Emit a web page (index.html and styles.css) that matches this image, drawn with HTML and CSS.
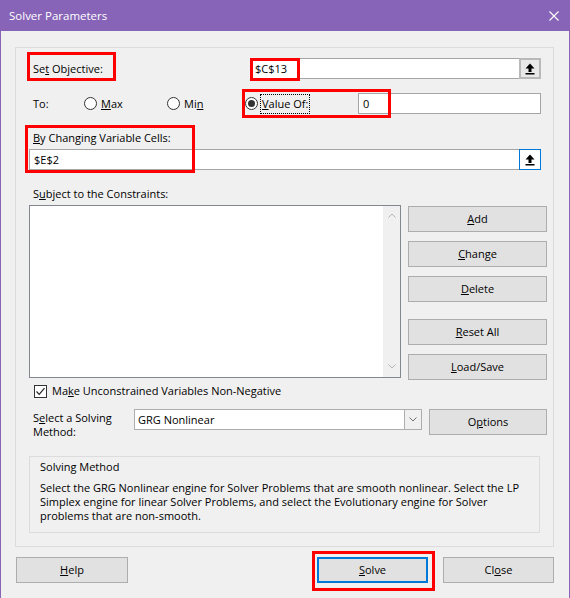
FILE: index.html
```html
<!DOCTYPE html>
<html lang="en">
<head>
    <meta charset="utf-8">
    <title>Solver Parameters</title>
    <link rel="stylesheet" href="styles.css">
</head>
<body>
<div class="window">
    <div class="titlebar">
        <span class="title">Solver Parameters</span>
        <svg class="close" width="10" height="10" viewBox="0 0 10 10"><path d="M0.5 0.5L9.5 9.5M9.5 0.5L0.5 9.5" stroke="#fff" stroke-width="1.1"/></svg>
    </div>

    <div class="group">
        <div class="row row-objective">
            <span class="lbl">Se<u>t</u> Objective:</span>
            <div class="field field-objective">
                <span class="val">$C$13</span>
                <span class="refbtn">
                    <svg width="10" height="12" viewBox="0 0 10 12"><path d="M5 0.5L9.5 5.5H6.5V9H3.5V5.5H0.5Z" fill="#000"/><rect x="0.5" y="10" width="9" height="1.5" fill="#000"/></svg>
                </span>
            </div>
        </div>

        <div class="row row-to">
            <span class="lbl to">To:</span>
            <span class="opt opt-max"><span class="radio"></span><span><u>M</u>ax</span></span>
            <span class="opt opt-min"><span class="radio"></span><span>Mi<u>n</u></span></span>
            <span class="opt opt-value"><span class="radio on"></span><span class="focus"><u>V</u>alue Of:</span></span>
            <div class="field field-value"><span class="val">0</span></div>
        </div>

        <div class="lbl cap cap-changing"><u>B</u>y Changing Variable Cells:</div>
        <div class="field field-changing">
            <span class="val">$E$2</span>
            <span class="refbtn ref-active">
                <svg width="10" height="12" viewBox="0 0 10 12"><path d="M5 0.5L9.5 5.5H6.5V9H3.5V5.5H0.5Z" fill="#000"/><rect x="0.5" y="10" width="9" height="1.5" fill="#000"/></svg>
            </span>
        </div>

        <div class="lbl cap cap-subject">S<u>u</u>bject to the Constraints:</div>
        <div class="constraints">
            <div class="listbox">
                <div class="scroll">
                    <svg width="8" height="5" viewBox="0 0 8 5"><path d="M0.5 4.5L4 1L7.5 4.5" fill="none" stroke="#b4b4b4"/></svg>
                    <svg width="8" height="5" viewBox="0 0 8 5"><path d="M0.5 0.5L4 4L7.5 0.5" fill="none" stroke="#b4b4b4"/></svg>
                </div>
            </div>
            <div class="side">
                <button class="btn"><u>A</u>dd</button>
                <button class="btn"><u>C</u>hange</button>
                <button class="btn"><u>D</u>elete</button>
                <button class="btn btn-reset"><u>R</u>eset All</button>
                <button class="btn"><u>L</u>oad/Save</button>
            </div>
        </div>

        <div class="check-row">
            <span class="check">
                <svg width="11" height="11" viewBox="0 0 11 11"><path d="M1.5 5.5L4.2 8.3L9.5 2.2" fill="none" stroke="#222" stroke-width="1.2"/></svg>
            </span>
            <span>Ma<u>k</u>e Unconstrained Variables Non-Negative</span>
        </div>

        <div class="method-row">
            <span class="lbl method-lbl">S<u>e</u>lect a Solving<br>Method:</span>
            <div class="combo">
                <span class="combo-val">GRG Nonlinear</span>
                <span class="drop">
                    <svg width="8" height="5" viewBox="0 0 8 5"><path d="M0.5 0.5L4 4L7.5 0.5" fill="none" stroke="#707070"/></svg>
                </span>
            </div>
            <button class="btn btn-options">O<u>p</u>tions</button>
        </div>

        <div class="info">
            <div class="info-title">Solving Method</div>
            <p class="info-text">Select the GRG Nonlinear engine for Solver Problems that are smooth nonlinear. Select the LP<br>Simplex engine for linear Solver Problems, and select the Evolutionary engine for Solver<br>problems that are non-smooth.</p>
        </div>
    </div>

    <div class="footer">
        <button class="btn btn-foot"><u>H</u>elp</button>
        <button class="btn btn-foot btn-default"><u>S</u>olve</button>
        <button class="btn btn-foot">Cl<u>o</u>se</button>
    </div>

    <div class="mark mark-objective"></div>
    <div class="mark mark-cell"></div>
    <div class="mark mark-value"></div>
    <div class="mark mark-changing"></div>
    <div class="mark mark-solve"></div>
</div>
</body>
</html>
```

FILE: styles.css
```css
* {
    box-sizing: border-box;
}
body {
    margin: 0;
    background: #f0f0f0;
    font: 11px/16px "Open Sans", "Noto Sans", sans-serif;
    color: #000;
}
u {
    text-underline-offset: 1px;
}

.window {
    position: relative;
    width: 570px;
    height: 598px;
    border-left: 1px solid #8764b8;
    border-right: 1px solid #8764b8;
    background: #f0f0f0;
    overflow: hidden;
}
.titlebar {
    height: 31px;
    background: #8764b8;
    color: #fff;
    display: flex;
    align-items: center;
    justify-content: space-between;
    padding: 0 10px 0 8px;
    font-size: 11.5px;
}

.group {
    margin: 16px 0 0 14px;
    width: 539px;
    height: 500px;
    border: 1px solid #dcdcdc;
    padding: 0 12px 0 13px;
}
.lbl {
    padding-left: 4px;
    white-space: nowrap;
}
.row {
    display: flex;
    align-items: center;
    height: 21px;
}
.row-objective {
    margin-top: 10px;
}
.row-objective .lbl {
    flex: 1;
}
.field {
    display: flex;
    align-items: center;
    height: 21px;
    background: #fff;
    border: 1px solid #a5a5a5;
    padding-left: 4px;
}
.field-objective {
    width: 291px;
}
.refbtn {
    margin: -1px -1px -1px auto;
    width: 22px;
    height: 21px;
    display: flex;
    align-items: center;
    justify-content: center;
    border: 2px solid #b9b9b9;
    background: #e9e9e9;
}
.refbtn.ref-active {
    border: 1px solid #0078d7;
    background: #fff;
}

.row-to {
    margin-top: 14px;
}
.to {
    width: 55px;
}
.opt {
    display: flex;
    align-items: center;
    gap: 4px;
}
.opt-max {
    width: 83px;
}
.opt-min {
    width: 78px;
}
.opt-value {
    width: 113px;
    gap: 2px;
}
.radio {
    position: relative;
    flex: none;
    width: 13px;
    height: 13px;
    border: 1px solid #333;
    border-radius: 50%;
    background: #fff;
}
.radio.on::after {
    content: "";
    position: absolute;
    left: 2px;
    top: 2px;
    width: 7px;
    height: 7px;
    border-radius: 50%;
    background: #333;
}
.focus {
    border: 1px dotted #000;
    padding: 1px 1px;
}
.field-value {
    width: 183px;
}

.cap {
    height: 16px;
    margin-top: 16px;
}
.field-changing {
    margin-top: 3px;
    width: 512px;
}

.constraints {
    display: flex;
    gap: 7px;
    margin: 3px -6px 0 0;
    height: 173px;
}
.listbox {
    width: 372px;
    height: 173px;
    border: 1px solid #828790;
    background: #fff;
    display: flex;
    justify-content: flex-end;
}
.scroll {
    width: 17px;
    background: #f0f0f0;
    display: flex;
    flex-direction: column;
    justify-content: space-between;
    align-items: center;
    padding: 7px 0 8px;
}
.side {
    width: 139px;
    display: flex;
    flex-direction: column;
    gap: 9px;
    padding-top: 1px;
}
.btn {
    flex: none;
    height: 26px;
    background: #e1e1e1;
    border: 1px solid #adadad;
    font: inherit;
    color: #000;
    padding: 0;
}
.btn-reset {
    margin-top: 8px;
}

.check-row {
    display: flex;
    align-items: center;
    gap: 5px;
    height: 16px;
    margin-top: 5px;
    padding-left: 5px;
}
.check {
    width: 13px;
    height: 13px;
    border: 1px solid #333;
    background: #fff;
    display: flex;
}

.method-row {
    display: flex;
    align-items: flex-start;
    height: 26px;
    margin: 10px -6px 0 0;
}
.method-lbl {
    width: 105px;
    line-height: 14px;
    margin-top: 2px;
}
.combo {
    width: 288px;
    height: 21px;
    background: #fff;
    border: 1px solid #adadad;
    display: flex;
    align-items: center;
    padding-left: 3px;
}
.combo-val {
    flex: 1;
}
.drop {
    width: 17px;
    height: 19px;
    border-left: 1px solid #adadad;
    background: #f0f0f0;
    display: flex;
    align-items: center;
    justify-content: center;
}
.btn-options {
    width: 118px;
    margin-left: 7px;
}

.info {
    margin-top: 21px;
    width: 511px;
    height: 77px;
    border: 1px solid #dcdcdc;
    padding: 3px 0 0 10px;
}
.info-title {
    line-height: 14px;
}
.info-text {
    margin: 7px 0 0;
    line-height: 14px;
    white-space: nowrap;
}

.footer {
    display: flex;
    margin-top: 10px;
    padding: 0 15px;
}
.btn-foot {
    width: 111px;
}
.btn-foot:first-child {
    width: 112px;
}
.btn-default {
    margin: 0 15px 0 auto;
    border: 2px solid #0078d7;
}

.mark {
    position: absolute;
    border: 3px solid #ff0000;
    pointer-events: none;
}
.mark-objective {
    left: 26px;
    top: 52px;
    width: 89px;
    height: 29px;
}
.mark-cell {
    left: 249px;
    top: 58px;
    width: 50px;
    height: 23px;
}
.mark-value {
    left: 241px;
    top: 89px;
    width: 149px;
    height: 29px;
}
.mark-changing {
    left: 24px;
    top: 125px;
    width: 170px;
    height: 48px;
}
.mark-solve {
    left: 311px;
    top: 551px;
    width: 123px;
    height: 40px;
}
```
